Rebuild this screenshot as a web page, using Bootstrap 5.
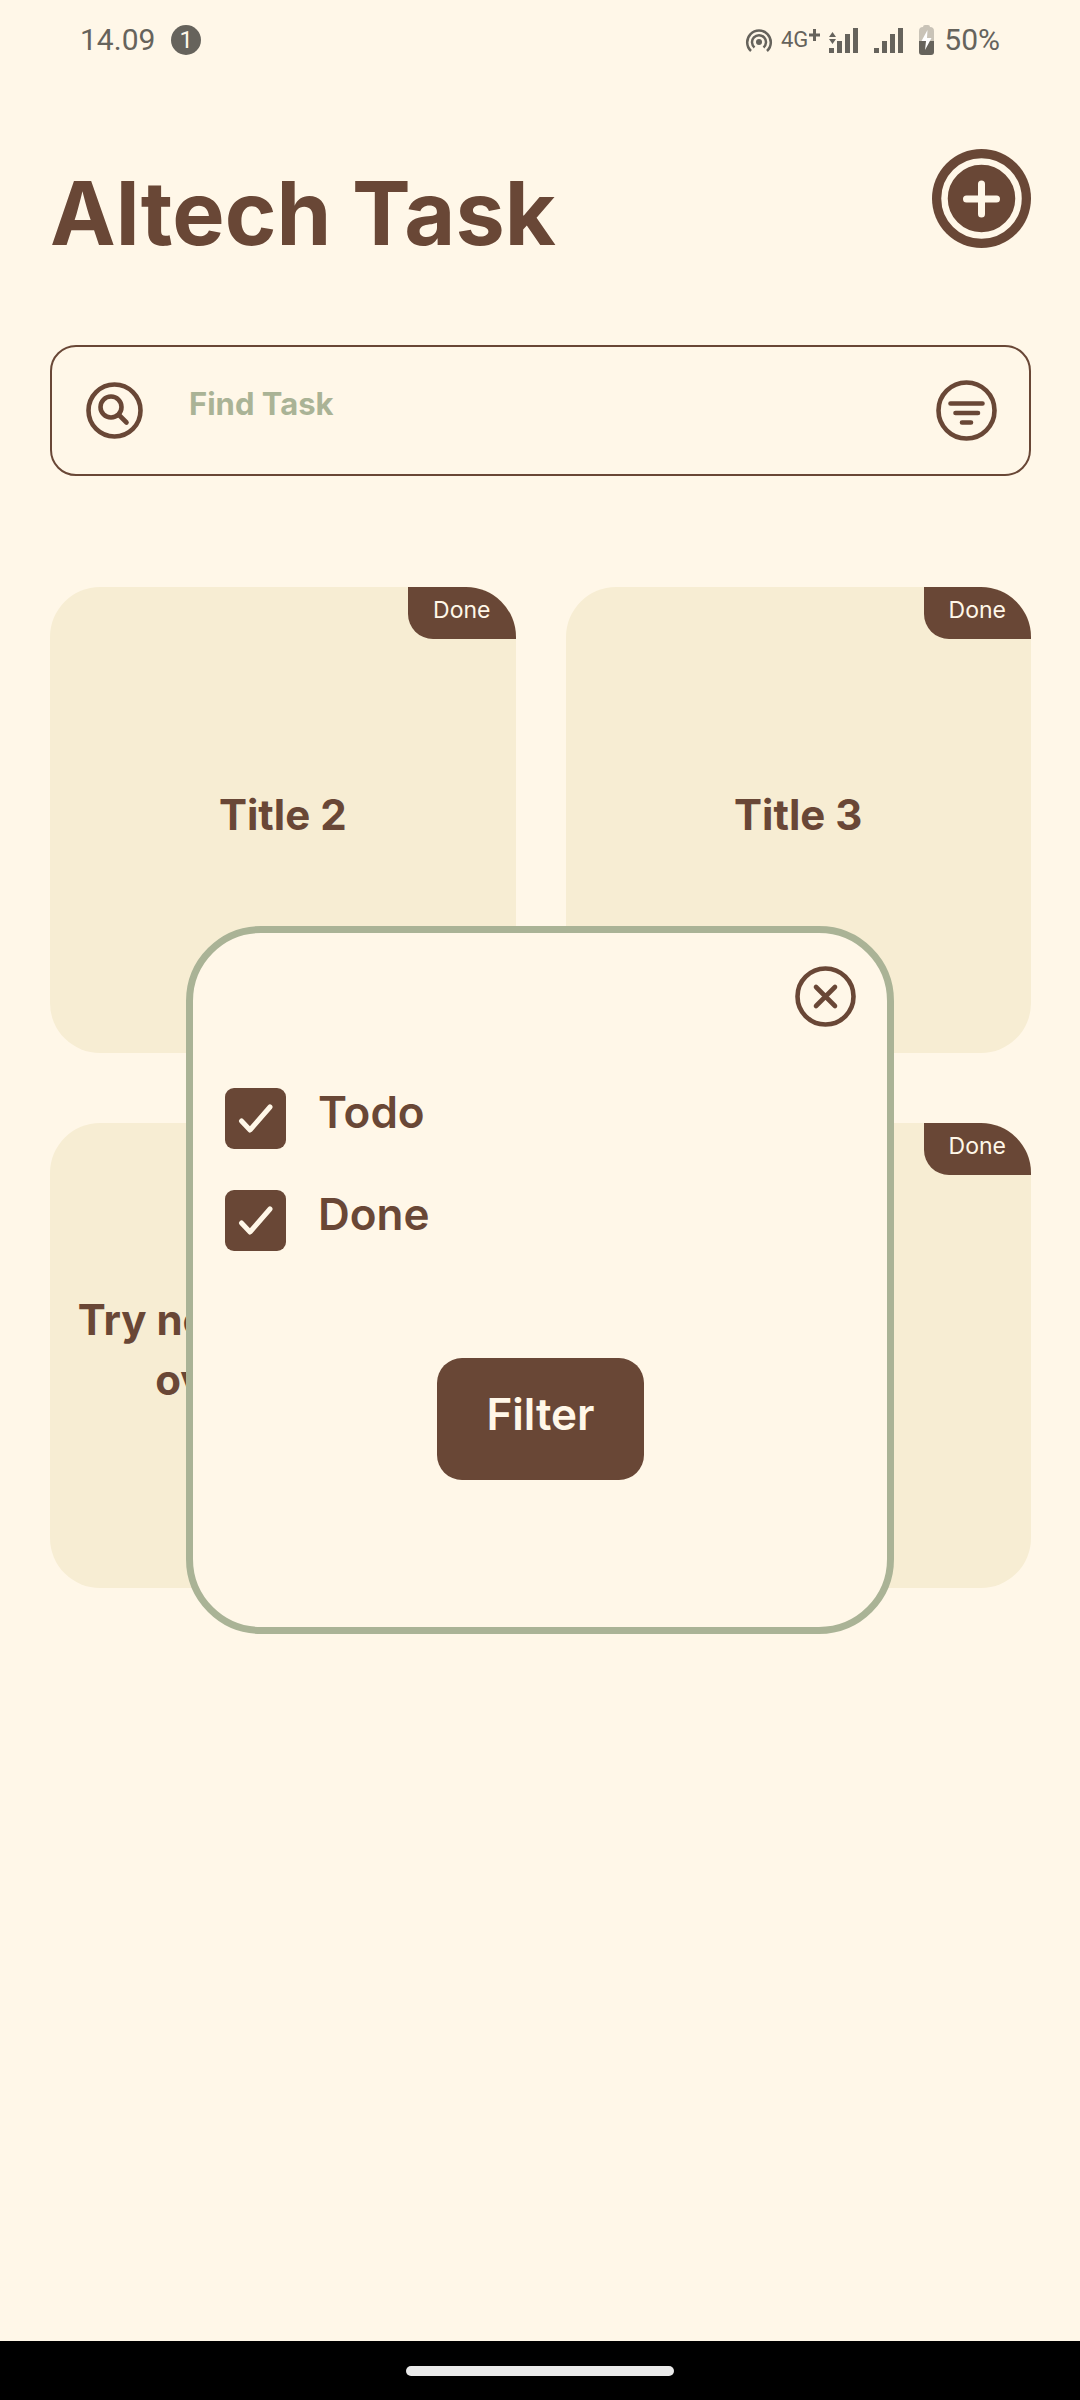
<!DOCTYPE html>
<html lang="en">
<head>
<meta charset="utf-8">
<meta name="viewport" content="width=device-width, initial-scale=1">
<title>Altech Task</title>
<link href="https://cdn.jsdelivr.net/npm/bootstrap@5.3.0/dist/css/bootstrap.min.css" rel="stylesheet">
<style>
:root { --cream:#fff7e8; --sand:#f7edd3; --brown:#694736; --sage:#aab396; --status:#66635c; }
body { background:var(--cream); color:var(--brown); font-family:Inter,"Open Sans",sans-serif; }
svg { display:block; flex:none; }
.status-bar { height:80px; padding:0 80px; color:var(--status); font:400 30px/36px Roboto,sans-serif; }
.notice-dot { width:30px; height:30px; background:var(--status); color:var(--cream); font-size:24px; line-height:30px; }
.net-label { font-size:22px; line-height:30px; }
.charge { margin-right:10px; }
.page-x { padding-left:50px; padding-right:49px; }
.app-head { padding-top:69px; }
.app-title { font-size:88px; line-height:104px; font-weight:700; margin-top:12px; }
.search-box { height:131px; margin-top:80px; border:2px solid var(--brown); border-radius:26px; padding:0 32px 0 34px; }
.search-field { font-size:31px; line-height:40px; font-weight:700; color:var(--brown); margin:0 24px 14px 46px; padding:0; }
.search-field:focus { background:transparent; box-shadow:none; }
.search-field::placeholder { color:var(--sage); opacity:1; }
.icon-btn { background:none; border:0; padding:0; }
.task-grid { display:grid; grid-template-columns:1fr 1fr; gap:70px 50px; margin-top:111px; }
.task-card { aspect-ratio:1; background:var(--sand); border-radius:50px; overflow:hidden; padding:0 16px; }
.task-name { font-size:42px; line-height:60px; font-weight:700; color:var(--brown); margin:0; padding-bottom:10px; }
.state-tag { top:0; right:0; height:52px; padding:0 25px; background:var(--brown); color:var(--cream); font-size:23px; line-height:46px; border-bottom-left-radius:25px; }
.state-todo { background:var(--sage); }
.filter-layer { inset:160px 0 0 0; pointer-events:none; }
.filter-panel { width:708px; height:708px; max-width:100%; background:var(--cream); border:7px solid var(--sage); border-radius:75px; padding:33px 31px 33px 32px; pointer-events:auto; }
.options { margin-top:61px; gap:41px; }
.option-row { gap:32px; height:61px; }
.option-row .form-check-input { width:61px; height:61px; border:0; border-radius:9px; margin:0; }
.option-row .form-check-input:checked { background-color:var(--brown); background-size:100% 100%; background-image:url("data:image/svg+xml,%3Csvg xmlns='http://www.w3.org/2000/svg' viewBox='0 0 61 61'%3E%3Cpath d='M16.500 33l8.500 9L45 19' fill='none' stroke='%23fff7e8' stroke-width='5' stroke-linecap='round' stroke-linejoin='round'/%3E%3C/svg%3E"); }
.option-row label { font-size:44px; line-height:50px; font-weight:600; padding-bottom:14px; }
.filter-btn { width:207px; height:122px; margin-top:107px; border:0; border-radius:25px; background:var(--brown); color:var(--cream); font-size:44px; line-height:50px; font-weight:600; padding:0 0 10px; }
.filter-btn:hover { background:var(--brown); color:var(--cream); }
.nav-strip { height:59px; background:#000; }
.nav-pill { width:268px; height:10px; background:#eaeaea; }
</style>
</head>
<body>
<div class="min-vh-100 d-flex flex-column position-relative">
  <header class="status-bar d-flex align-items-center justify-content-between">
    <div class="d-flex align-items-center gap-3">
      <span>14.09</span>
      <span class="notice-dot rounded-circle text-center">1</span>
    </div>
    <div class="d-flex align-items-center">
      <svg class="me-2" width="28" height="26" viewBox="0 0 28 26" fill="none" stroke="#66635c" stroke-width="2.500"><circle cx="14" cy="15" r="3" fill="#66635c" stroke="none"/><path d="M9.500 20.500a7 7 0 1 1 9 0M6 24a11.800 11.800 0 1 1 16 0"/></svg>
      <span class="net-label">4G</span>
      <svg class="me-2" width="13" height="30" viewBox="0 0 13 30" stroke="#66635c" stroke-width="3"><path d="M1 10h11M6.500 4v12"/></svg>
      <svg class="me-3" width="29" height="26" viewBox="0 0 29 26" fill="#66635c"><path d="M0 21h5v5H0zM8 14h5v12H8zM16 7h5v19h-5zM24 1h5v25h-5zM0 10l3.500-5L7 10zM0 12h7l-3.500 5z"/></svg>
      <svg class="me-3" width="29" height="26" viewBox="0 0 29 26" fill="#66635c"><path d="M0 21h5v5H0zM8 14h5v12H8zM16 7h5v19h-5zM24 1h5v25h-5z"/></svg>
      <svg class="charge" width="15" height="30" viewBox="0 0 15 30"><path d="M4 2q0-2 2-2h3q2 0 2 2 4 0 4 4v10H0V6q0-4 4-4z" fill="#c9c3b7"/><path d="M0 16h15v11q0 3-3 3H3q-3 0-3-3z" fill="#66635c"/><path d="M8.500 5L2.500 16H7l-1 9 6.500-12H8z" fill="#fff"/></svg>
      <span>50%</span>
    </div>
  </header>

  <main class="page-x flex-grow-1">
    <div class="app-head d-flex justify-content-between align-items-start">
      <h1 class="app-title mb-0">Altech Task</h1>
      <button class="icon-btn" type="button" aria-label="Add task">
        <svg width="99" height="99" viewBox="0 0 99 99"><circle cx="49.500" cy="49.500" r="49.500" fill="#694736"/><circle cx="49.500" cy="49.500" r="37" fill="none" stroke="#fff7e8" stroke-width="6.500"/><path d="M34.500 50h30M49.500 35v30" stroke="#fff7e8" stroke-width="7" stroke-linecap="round"/></svg>
      </button>
    </div>

    <form class="search-box d-flex align-items-center" role="search">
      <button class="icon-btn" type="button" aria-label="Search">
        <svg width="57" height="57" viewBox="0 0 57 57" fill="none" stroke="#694736" stroke-width="4.600" stroke-linecap="round"><circle cx="28.500" cy="28.500" r="26"/><circle cx="25" cy="25" r="10.500"/><path d="M33 33l7.500 7.500"/></svg>
      </button>
      <input class="search-field form-control border-0 bg-transparent" type="text" placeholder="Find Task" aria-label="Find Task">
      <button class="icon-btn" type="button" aria-label="Filter tasks">
        <svg width="61" height="61" viewBox="0 0 61 61" fill="none" stroke="#694736" stroke-width="4.600" stroke-linecap="round"><circle cx="30.500" cy="30.500" r="28"/><path d="M14.500 23.500h32M19.500 33h22.500M26 42.500h9"/></svg>
      </button>
    </form>

    <section class="task-grid">
      <article class="task-card position-relative d-flex align-items-center justify-content-center text-center"><h2 class="task-name">Title 2</h2><span class="state-tag position-absolute">Done</span></article>
      <article class="task-card position-relative d-flex align-items-center justify-content-center text-center"><h2 class="task-name">Title 3</h2><span class="state-tag position-absolute">Done</span></article>
      <article class="task-card position-relative d-flex align-items-center justify-content-center text-center"><h2 class="task-name">Try new title ell with overilload ...</h2><span class="state-tag state-todo position-absolute">Todo</span></article>
      <article class="task-card position-relative d-flex align-items-center justify-content-center text-center"><h2 class="task-name">Tigg</h2><span class="state-tag position-absolute">Done</span></article>
    </section>
  </main>

  <div class="filter-layer position-absolute d-flex align-items-center justify-content-center">
    <form class="filter-panel d-flex flex-column" role="dialog" aria-label="Filter tasks">
      <button class="icon-btn align-self-end" type="button" aria-label="Close">
        <svg width="61" height="61" viewBox="0 0 61 61" fill="none" stroke="#694736" stroke-width="4.600" stroke-linecap="round"><circle cx="30.500" cy="30.500" r="28"/><path d="M21 21l19 19M40 21L21 40"/></svg>
      </button>
      <div class="options d-flex flex-column">
        <div class="option-row d-flex align-items-center"><input class="form-check-input" type="checkbox" id="todo" checked><label for="todo">Todo</label></div>
        <div class="option-row d-flex align-items-center"><input class="form-check-input" type="checkbox" id="done" checked><label for="done">Done</label></div>
      </div>
      <button class="filter-btn btn align-self-center" type="button">Filter</button>
    </form>
  </div>

  <footer class="nav-strip d-flex align-items-center justify-content-center"><div class="nav-pill rounded-pill"></div></footer>
</div>
<script src="https://cdn.jsdelivr.net/npm/bootstrap@5.3.0/dist/js/bootstrap.bundle.min.js"></script>
</body>
</html>
